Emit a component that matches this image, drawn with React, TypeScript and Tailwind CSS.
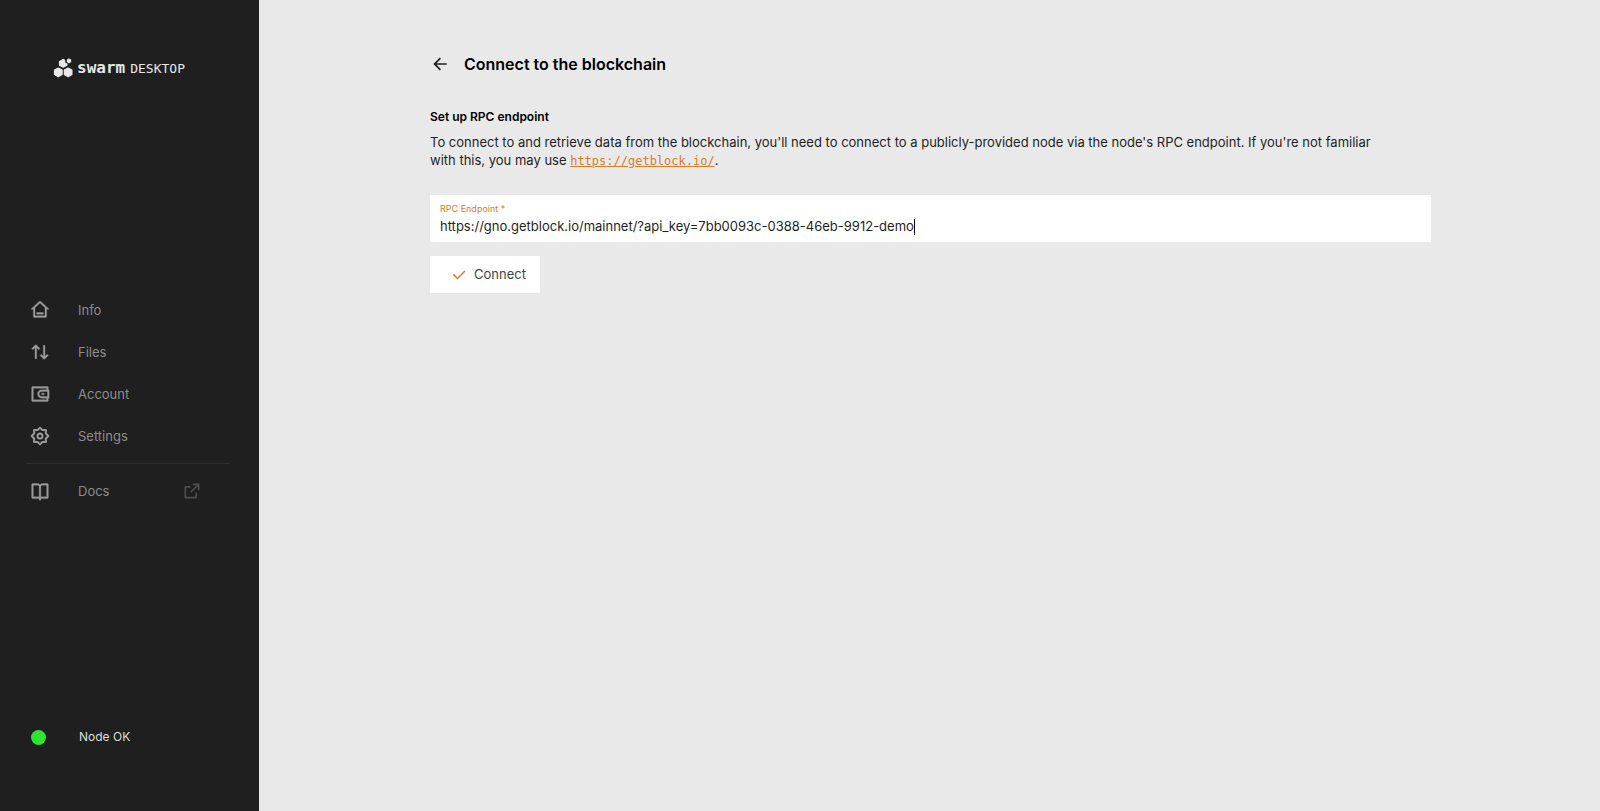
import { useState } from "react";
import type { ReactNode } from "react";
import {
    RiArrowLeftLine,
    RiArrowUpDownLine,
    RiBookOpenLine,
    RiCheckLine,
    RiExternalLinkLine,
    RiHome3Line,
    RiWallet3Line,
} from "react-icons/ri";

function Logo() {
    return (
        <div className="flex items-center gap-1 h-6 pl-[53px] text-[#e8e8e8]">
            <svg width="20" height="20" viewBox="0 0 20 20" fill="currentColor" stroke="currentColor" strokeWidth="1.2" strokeLinejoin="round">
                <path d="M5.3 10 9.1 12.1V16.6L5.3 18.8 1.5 16.6V12.1Z" />
                <path d="M15.1 10 18.9 12.1V16.6L15.1 18.8 11.3 16.6V12.1Z" />
                <path d="M10.2 1.4 11.6 2.2V4.8L13.9 6V7.2L10.2 9.2 6.5 7.2V3.5Z" />
                <path d="M16 .9 17.6 1.9V3.8L16 4.8 14.4 3.8V1.9Z" />
            </svg>
            <p className="flex items-baseline gap-[5px] font-['DejaVu_Sans_Mono',monospace]">
                <span className="text-base font-bold leading-6">swarm</span>
                <span className="text-[13px] leading-6">DESKTOP</span>
            </p>
        </div>
    );
}

function SettingsIcon() {
    return (
        <svg width="20" height="20" viewBox="0 0 24 24" fill="none" stroke="currentColor" strokeWidth="2.4" strokeLinejoin="round">
            <path d="M12 2l2.93 2.93h4.14v4.14L22 12l-2.93 2.93v4.14h-4.14L12 22l-2.93-2.93H4.93v-4.14L2 12l2.93-2.93V4.93h4.14z" />
            <circle cx="12" cy="12" r="3" />
        </svg>
    );
}

const links: { label: string; icon: ReactNode }[] = [
    { label: "Info", icon: <RiHome3Line size={20} strokeWidth={0.4} stroke="currentColor" /> },
    { label: "Files", icon: <RiArrowUpDownLine size={20} strokeWidth={0.4} stroke="currentColor" /> },
    { label: "Account", icon: <RiWallet3Line size={20} strokeWidth={0.4} stroke="currentColor" /> },
    { label: "Settings", icon: <SettingsIcon /> },
];

function NavLink({ label, icon, children }: { label: string; icon: ReactNode; children?: ReactNode }) {
    return (
        <a href="#" className="flex items-center h-[42px] pl-[30px] text-[13px] text-[#8c8c8c]">
            <span className="w-12 text-[#9a9a9a]">{icon}</span>
            <span className="flex-1 pt-0.5">{label}</span>
            {children}
        </a>
    );
}

function Sidebar() {
    return (
        <aside className="w-[259px] shrink-0 flex flex-col justify-between pt-14 pb-[62px] bg-[#1f1f1f]">
            <Logo />
            <nav className="pb-1">
                {links.map(link => (
                    <NavLink key={link.label} label={link.label} icon={link.icon} />
                ))}
                <hr className="my-1.5 ml-[26px] mr-[29px] border-[#2c2c2c]" />
                <NavLink label="Docs" icon={<RiBookOpenLine size={20} strokeWidth={0.4} stroke="currentColor" />}>
                    <RiExternalLinkLine size={20} className="mr-[57px] text-[#4e4e4e]" />
                </NavLink>
            </nav>
            <div className="flex items-center h-6 pl-[31px] text-xs text-[#dedede]">
                <span className="w-12">
                    <span className="block size-[15px] rounded-full bg-[#2be52f]" />
                </span>
                Node OK
            </div>
        </aside>
    );
}

export default function App() {
    const [endpoint, setEndpoint] = useState("https://gno.getblock.io/mainnet/?api_key=7bb0093c-0388-46eb-9912-demo");

    return (
        <div className="min-h-screen flex bg-[#e9e9e9] text-[#1f1f1f] font-[Inter,sans-serif]">
            <Sidebar />
            <main className="flex-1 pl-[26px] pr-6">
                <div className="w-full max-w-[1001px] mx-auto pt-[52px]">
                    <div className="flex items-center gap-3.5 h-6">
                        <button type="button" aria-label="Back">
                            <RiArrowLeftLine size={20} />
                        </button>
                        <h1 className="text-base font-semibold text-black">Connect to the blockchain</h1>
                    </div>

                    <h2 className="mt-8 text-xs font-semibold leading-[18px] text-black">Set up RPC endpoint</h2>
                    <p className="mt-[7px] text-[13px] leading-[18px]">
                        To connect to and retrieve data from the blockchain, you'll need to connect to a publicly-provided node via the node's RPC endpoint. If you're not familiar
                        <br />
                        with this, you may use{" "}
                        <a href="https://getblock.io/" className="text-[#e07b2a] underline text-xs leading-none font-['DejaVu_Sans_Mono',monospace]">
                            https://getblock.io/
                        </a>
                        .
                    </p>

                    <form onSubmit={e => e.preventDefault()}>
                        <div className="mt-[26px] h-[47px] px-2.5 pt-2 bg-white">
                            <label htmlFor="endpoint" className="block text-[9px] leading-3 text-[#e07b2a]">
                                RPC Endpoint *
                            </label>
                            <div className="flex items-center h-6">
                                <input
                                    id="endpoint"
                                    type="text"
                                    className="field-sizing-content max-w-full text-[13px] outline-none"
                                    value={endpoint}
                                    onChange={e => setEndpoint(e.target.value)}
                                />
                                <span className="w-px h-4 bg-black" />
                            </div>
                        </div>
                        <button type="submit" className="mt-3.5 flex items-center gap-1.5 h-[37px] pl-5 pr-3.5 bg-white text-[13px] text-[#444444]">
                            <RiCheckLine size={18} className="text-[#e07b2a]" />
                            Connect
                        </button>
                    </form>
                </div>
            </main>
        </div>
    );
}
